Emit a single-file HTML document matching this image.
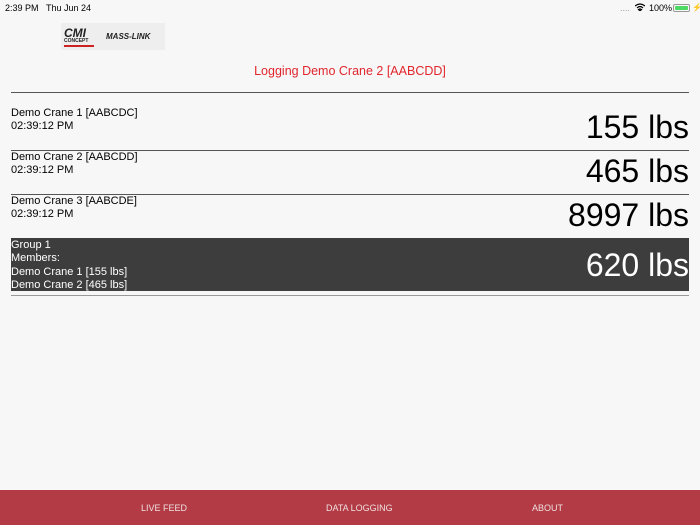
<!DOCTYPE html>
<html><head><style>
body{margin:0;width:700px;height:525px;background:#f7f7f7;font-family:"Liberation Sans",sans-serif;position:relative;overflow:hidden;color:#000}
.a{position:absolute}
.line{position:absolute;left:11px;width:678px;height:1px;background:#555}
.name{position:absolute;left:11px;font-size:11px;line-height:13px}
.big{position:absolute;right:11px;font-size:32px;line-height:36px}
</style></head><body>
<div class="a" style="left:5px;top:3px;font-size:9px">2:39 PM&nbsp;&nbsp;&nbsp;Thu Jun 24</div>
<div class="a" style="left:620px;top:3px;font-size:9px;color:#999">....</div>
<svg class="a" style="left:635px;top:3px" width="10" height="8" viewBox="0 0 10 8"><path d="M0 3Q5 -1 10 3M2 5Q5 2 8 5M5 8L3.5 6.5Q5 5.5 6.5 6.5Z" stroke="#000" stroke-width="1.2" fill="none"/></svg>
<div class="a" style="left:649px;top:3px;font-size:9px">100%</div>
<div class="a" style="left:673px;top:4px;width:15px;height:6px;border:1px solid #999;border-radius:2px;padding:0"><div style="margin:1px;height:4px;background:#4cd964;border-radius:1px"></div></div>
<div class="a" style="left:692px;top:3px;font-size:8px">⚡</div>
<div class="a" style="left:61px;top:23px;width:104px;height:27px;background:#eee"></div>
<div class="a" style="left:64px;top:26px;font:italic bold 12px 'Liberation Sans';color:#222">CMI</div>
<div class="a" style="left:64px;top:38px;font:bold 5px 'Liberation Sans';color:#222">CONCEPT</div>
<div class="a" style="left:64px;top:45px;width:30px;height:2px;background:#c22"></div>
<div class="a" style="left:106px;top:32px;font:italic bold 8px 'Liberation Sans';color:#222">MASS-LINK</div>
<div class="a" style="left:0;width:700px;top:64px;text-align:center;font-size:12.5px;color:#e0262c">Logging Demo Crane 2 [AABCDD]</div>
<div class="line" style="top:92px"></div>
<div class="name" style="top:107px">Demo Crane 1 [AABCDC]<br>02:39:12 PM</div>
<div class="big" style="top:109px">155 lbs</div>
<div class="line" style="top:150px"></div>
<div class="name" style="top:151px">Demo Crane 2 [AABCDD]<br>02:39:12 PM</div>
<div class="big" style="top:153px">465 lbs</div>
<div class="line" style="top:194px"></div>
<div class="name" style="top:195px">Demo Crane 3 [AABCDE]<br>02:39:12 PM</div>
<div class="big" style="top:197px">8997 lbs</div>
<div class="a" style="left:11px;top:238px;width:678px;height:53px;background:#3d3d3d"></div>
<div class="name" style="top:239px;color:#fff;line-height:13.3px">Group 1<br>Members:<br>Demo Crane 1 [155 lbs]<br>Demo Crane 2 [465 lbs]</div>
<div class="big" style="top:247px;color:#fff">620 lbs</div>
<div class="line" style="top:295px;background:#999"></div>
<div class="a" style="left:0;top:490px;width:700px;height:35px;background:#b23b45;color:#f0e0e0;font-size:9px">
<span class="a" style="left:141px;top:13px">LIVE FEED</span>
<span class="a" style="left:326px;top:13px">DATA LOGGING</span>
<span class="a" style="left:532px;top:13px">ABOUT</span>
</div>
</body></html>
